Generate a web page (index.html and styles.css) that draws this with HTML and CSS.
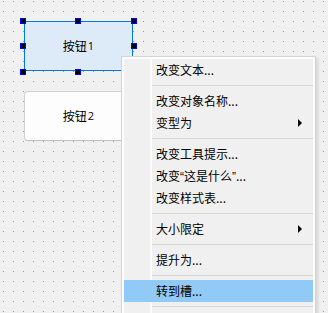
FILE: index.html
```html
<!DOCTYPE html>
<html>
  <head>
    <meta charset="utf-8" />
    <link rel="stylesheet" href="styles.css">
  </head>
  <body>
    <div class="form">
      <div class="selected">
        <div class="btn btn_sel">按钮<span class="num">1</span></div>
        <span class="handle tl"></span>
        <span class="handle tm"></span>
        <span class="handle tr"></span>
        <span class="handle ml"></span>
        <span class="handle mr"></span>
        <span class="handle bl"></span>
        <span class="handle bm"></span>
        <span class="handle br"></span>
      </div>
      <div class="btn btn_plain">按钮<span class="num">2</span></div>
    </div>

    <div class="menu">
      <div class="menu_body">
        <div class="item">改变文本...</div>
        <div class="sep"></div>
        <div class="item">改变对象名称...</div>
        <div class="item">变型为<span class="arrow"></span></div>
        <div class="sep"></div>
        <div class="item">改变工具提示...</div>
        <div class="item"><span>改变<span class="q">“</span>这是什么<span class="q">”</span>...</span></div>
        <div class="item">改变样式表...</div>
        <div class="sep"></div>
        <div class="item">大小限定<span class="arrow"></span></div>
        <div class="sep"></div>
        <div class="item">提升为...</div>
        <div class="sep"></div>
        <div class="item active">转到槽...</div>
        <div class="sep"></div>
        <div class="item"></div>
      </div>
    </div>
  </body>
</html>
```

FILE: styles.css
```css
*{
  box-sizing: border-box;
}
html, body{
  margin: 0px;
  height: 313px;
  overflow: hidden;
}
body{
  position: relative;
  font-family: "Noto Sans CJK SC", "Liberation Sans", sans-serif;
  font-size: 12px;
  color: #000;
  background-color: #f0f0f0;
  background-image: conic-gradient(from 270deg at 1px 1px, #9a9a9a 90deg, transparent 0deg);
  background-size: 10px 10px;
  background-position: 3px 1px;
}
.form{
  padding-top: 21px;
  padding-left: 24px;
}
.selected{
  position: relative;
  width: 109px;
}
.btn{
  width: 109px;
  height: 50px;
  display: flex;
  align-items: center;
  justify-content: center;
  line-height: 14px;
}
.num{
  font-family: "Open Sans", "Liberation Sans", sans-serif;
  font-size: 11px;
  margin-left: 1px;
}
.btn_sel{
  background: #ddeaf7;
  border: 1px solid #0078d7;
}
.btn_plain{
  margin-top: 20px;
  background: #fdfdfd;
  border: 1px solid #d0d0d0;
  border-bottom-color: #c0c0c0;
  border-radius: 4px;
}
.handle{
  position: absolute;
  width: 6px;
  height: 6px;
  background: #000;
  border: 1px solid #0000ff;
}
.tl{ left: -4px; top: -3px; }
.tm{ left: 51px; top: -3px; }
.tr{ left: 107px; top: -3px; }
.ml{ left: -4px; top: 22px; }
.mr{ left: 107px; top: 22px; }
.bl{ left: -4px; top: 48px; }
.bm{ left: 51px; top: 48px; }
.br{ left: 107px; top: 48px; }

.menu{
  position: absolute;
  left: 121px;
  top: 56px;
  width: 195px;
  border: 1px solid #d4d4d4;
  padding: 2px;
  background: #fcfcfc;
  box-shadow: 2px 2px 3px rgba(0, 0, 0, 0.12);
}
.menu_body{
  background-color: #f0f0f0;
  background-image: linear-gradient(to right, transparent 26px, #fbfbfb 26px, #fbfbfb 28px, transparent 28px);
}
.item{
  height: 22px;
  line-height: 22px;
  padding-left: 32px;
  padding-right: 11px;
  display: flex;
  align-items: center;
  justify-content: space-between;
  white-space: nowrap;
}
.item.active{
  background: #91c9f7;
}
.q{
  font-family: "Liberation Sans", sans-serif;
}
.arrow{
  width: 0px;
  height: 0px;
  border-left: 4px solid #000;
  border-top: 4px solid transparent;
  border-bottom: 4px solid transparent;
}
.sep{
  height: 1px;
  margin: 4px 0px 4px 28px;
  background: #d7d7d7;
}
```
